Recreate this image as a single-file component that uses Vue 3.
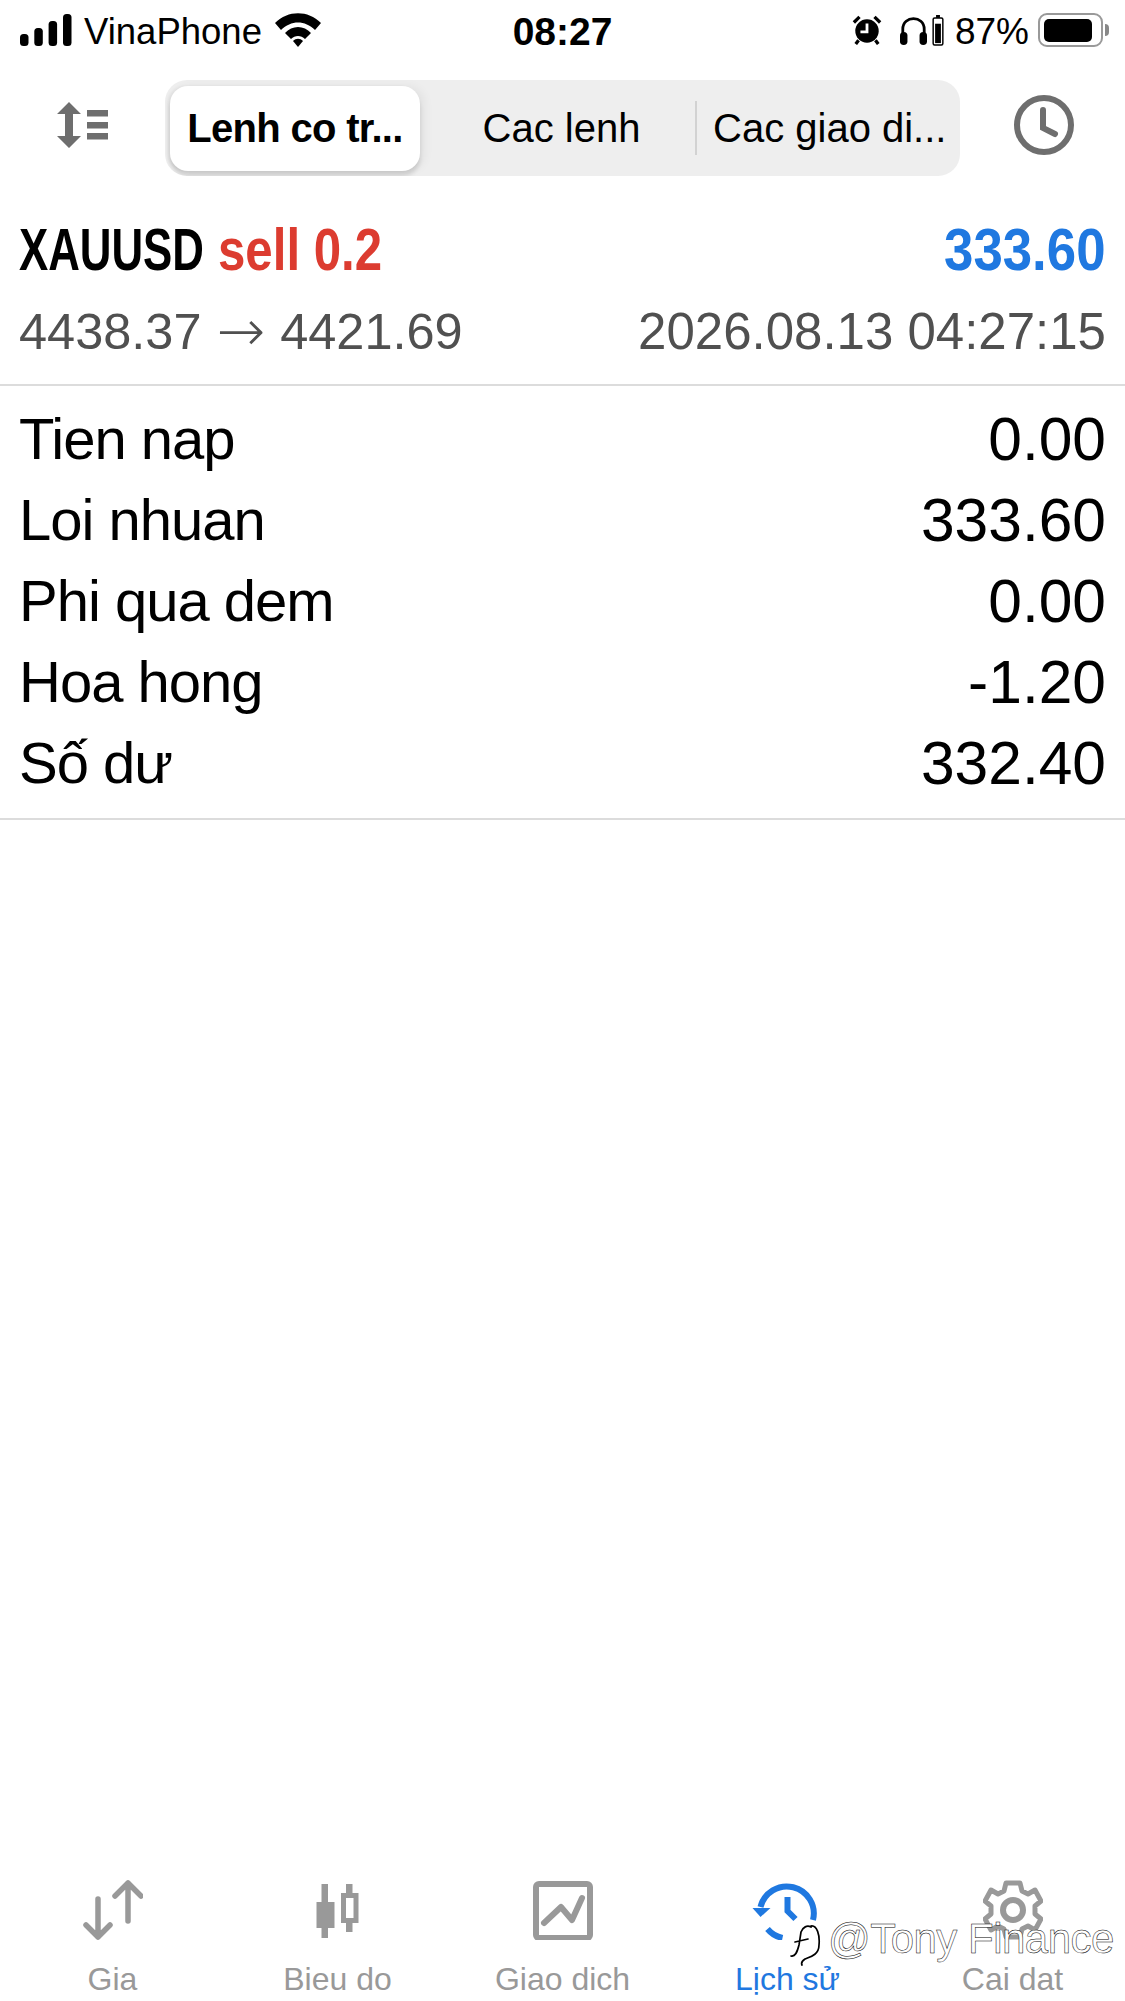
<script setup>
const rows = [
  { label: 'Tien nap', value: '0.00' },
  { label: 'Loi nhuan', value: '333.60' },
  { label: 'Phi qua dem', value: '0.00' },
  { label: 'Hoa hong', value: '-1.20' },
  { label: 'Số dư', value: '332.40' }
]
</script>

<template>
  <div class="screen">
    <div class="status">
      <div class="status-left">
        <svg class="signal" width="52" height="32" viewBox="0 0 52 32">
          <rect x="0" y="20" width="8.5" height="12" rx="3.5" />
          <rect x="14.3" y="14" width="8.5" height="18" rx="3.5" />
          <rect x="28.6" y="7" width="8.5" height="25" rx="3.5" />
          <rect x="43" y="0" width="8.5" height="32" rx="3.5" />
        </svg>
        <span class="carrier">VinaPhone</span>
        <svg class="wifi" width="46" height="34" viewBox="0 0 46 34">
          <path d="M0 10 C13 -3 33 -3 46 10 L40 17 C30 7 16 7 6 17Z" />
          <path d="M10 20 C17 12 29 12 36 20 L30 26 C26 22 20 22 16 26Z" />
          <path d="M18 28 C21 25 25 25 28 28 L23 34Z" />
        </svg>
      </div>
      <span class="time">08:27</span>
      <div class="status-right">
        <svg class="alarm" width="30" height="30" viewBox="0 0 32 32">
          <circle cx="16" cy="17" r="12.5" />
          <path d="M2 8 L8 2 M24 2 L30 8 M7 27 L4 31 M25 27 L28 31" stroke="#000" stroke-width="3.5" />
          <path d="M16 9 V18 H9" stroke="#fff" stroke-width="3" fill="none" />
        </svg>
        <svg class="phones" width="27" height="29" viewBox="0 0 29 31">
          <path d="M3 20 V14 C3 -1 26 -1 26 14 V20" fill="none" stroke="#000" stroke-width="3" />
          <rect x="0" y="17" width="8" height="14" rx="4" />
          <rect x="21" y="17" width="8" height="14" rx="4" />
        </svg>
        <svg class="mini-batt" width="12" height="31" viewBox="0 0 12 32">
          <rect x="4" y="0" width="4" height="3" />
          <rect x="1" y="3" width="10" height="28" rx="1.5" fill="none" stroke="#000" stroke-width="1.5" />
          <rect x="3" y="9" width="6" height="20" />
        </svg>
        <span class="percent">87%</span>
        <div class="battery">
          <div class="battery-fill"></div>
        </div>
        <div class="battery-cap"></div>
      </div>
    </div>

    <div class="toolbar">
      <svg class="sort-icon" width="54" height="46" viewBox="0 0 54 46">
        <path d="M12 0 L24 12 H16 V34 H24 L12 46 L0 34 H8 V12 H0Z" />
        <rect x="30" y="8" width="21" height="6.5" />
        <rect x="30" y="20" width="21" height="6.5" />
        <rect x="30" y="31" width="21" height="6.5" />
      </svg>
      <div class="tabs">
        <div class="tab active">Lenh co tr...</div>
        <div class="tab middle">Cac lenh</div>
        <div class="sep"></div>
        <div class="tab last">Cac giao di...</div>
      </div>
      <svg class="clock-icon" width="60" height="60" viewBox="0 0 60 60">
        <circle cx="30" cy="30" r="27" fill="none" stroke="#6e6e6e" stroke-width="6" />
        <path d="M29 15 V33 L41 39" fill="none" stroke="#6e6e6e" stroke-width="6" stroke-linecap="round" />
      </svg>
    </div>

    <div class="summary">
      <div class="summary-line">
        <div class="symbol">
          <span class="pair">XAUUSD</span>
          <span class="side">sell 0.2</span>
        </div>
        <span class="profit">333.60</span>
      </div>
      <div class="sub-line">
        <span class="prices">4438.37<span class="arrow">→</span>4421.69</span>
        <span class="date">2026.08.13 04:27:15</span>
      </div>
    </div>

    <div class="details">
      <div v-for="row in rows" :key="row.label" class="row">
        <span class="row-label">{{ row.label }}</span>
        <span>{{ row.value }}</span>
      </div>
    </div>

    <div class="spacer"></div>

    <div class="tabbar">
      <div class="nav">
        <svg width="60" height="60" viewBox="0 0 60 60" fill="none" stroke="#999" stroke-width="5.5" stroke-linecap="round" stroke-linejoin="round">
          <path d="M15 19 V57 M3 45 L15 57 L27 45" />
          <path d="M45 3 V41 M32 16 L45 3 L58 16" />
        </svg>
        <span>Gia</span>
      </div>
      <div class="nav">
        <svg width="44" height="60" viewBox="0 0 44 60">
          <rect x="5.5" y="4" width="6.5" height="54" fill="#999" />
          <rect x="0.5" y="22" width="18" height="26" fill="#999" />
          <rect x="30" y="4" width="6.5" height="48" fill="#999" />
          <rect x="27.5" y="15.5" width="12.5" height="25" fill="#fff" stroke="#999" stroke-width="5" />
        </svg>
        <span>Bieu do</span>
      </div>
      <div class="nav">
        <svg width="60" height="60" viewBox="0 0 60 60" fill="none" stroke="#999" stroke-width="6" stroke-linecap="round" stroke-linejoin="round">
          <rect x="3" y="4" width="54" height="54" rx="3" />
          <path d="M11 43 L28 27 L39 40 L49 18" />
        </svg>
        <span>Giao dich</span>
      </div>
      <div class="nav current">
        <svg width="72" height="60" viewBox="0 0 72 60" fill="none" stroke="#1f78e0" stroke-width="6">
          <path d="M8.5 27 A27 27 0 1 1 61 40" />
          <path d="M15.5 49 A27 27 0 0 0 30.5 58" />
          <path d="M0.5 28 H18.5 L8.5 37Z" fill="#1f78e0" stroke="none" />
          <path d="M35.5 17 V31 L43.5 39" />
        </svg>
        <span>Lịch sử</span>
      </div>
      <div class="nav">
        <svg width="60" height="60" viewBox="0 0 60 60">
          <path d="M23 3 H37 L39 11 L45 14 L52 10 L58 21 L52 26 V34 L58 39 L52 50 L45 46 L39 49 L37 57 H23 L21 49 L15 46 L8 50 L2 39 L8 34 V26 L2 21 L8 10 L15 14 L21 11Z" fill="none" stroke="#999" stroke-width="5" stroke-linejoin="round" />
          <circle cx="30" cy="30" r="10" fill="none" stroke="#999" stroke-width="6" />
        </svg>
        <span>Cai dat</span>
      </div>
    </div>

    <div class="watermark">
      <svg width="32" height="42" viewBox="0 0 32 42" fill="none" stroke-linecap="round">
        <path d="M1 31 C5 32 7 28 9 20 L11 7 C13 2 17 0 21 2 M5 17 L18 14 M21 1 C27 0 30 10 29 20 C29 30 20 32 15 34 C12 36 11 38 12 40" stroke="#fff" stroke-width="4" />
        <path d="M1 31 C5 32 7 28 9 20 L11 7 C13 2 17 0 21 2 M5 17 L18 14 M21 1 C27 0 30 10 29 20 C29 30 20 32 15 34 C12 36 11 38 12 40" stroke="#000" stroke-width="1.7" />
      </svg>
      <span class="mark-text">@Tony Finance</span>
    </div>
  </div>
</template>

<style>
html, body {
  margin: 0;
  background: #fff;
}
</style>

<style scoped>
.screen {
  position: relative;
  width: 1125px;
  height: 2001px;
  overflow: hidden;
  display: flex;
  flex-direction: column;
  background: #fff;
  color: #000;
  font-family: "Liberation Sans", Arial, sans-serif;
}

.status {
  height: 60px;
  display: grid;
  grid-template-columns: 1fr auto 1fr;
  align-items: center;
  padding: 0 16px;
}

.status-left {
  display: flex;
  align-items: center;
  padding-left: 4px;
}

.signal, .wifi, .alarm, .phones, .mini-batt {
  fill: #000;
}

.carrier {
  margin-left: 12px;
  margin-right: 13px;
  padding-top: 3px;
  font-size: 36.5px;
}

.percent {
  margin-left: 11px;
  padding-top: 3px;
  font-size: 37px;
}

.time {
  padding-top: 3px;
  font-size: 39px;
  font-weight: 700;
}

.status-right {
  display: flex;
  align-items: center;
  justify-content: flex-end;
}

.phones {
  margin-left: 18px;
}

.mini-batt {
  margin-left: 5px;
}

.battery {
  width: 65px;
  height: 34px;
  margin-left: 9px;
  padding: 3.5px;
  box-sizing: border-box;
  border: 2.5px solid #999;
  border-radius: 9px;
}

.battery-fill {
  width: 48px;
  height: 100%;
  background: #000;
  border-radius: 5px;
}

.battery-cap {
  width: 4px;
  height: 12px;
  margin-left: 2px;
  background: #888;
  border-radius: 0 4px 4px 0;
}

.toolbar {
  display: flex;
  align-items: center;
  height: 96px;
  margin-top: 20px;
  padding-left: 57px;
}

.sort-icon {
  fill: #6e6e6e;
  flex: none;
  margin-bottom: 6px;
}

.tabs {
  display: flex;
  align-items: center;
  width: 795px;
  height: 96px;
  margin-left: 54px;
  overflow: hidden;
  background: #eeeeee;
  border-radius: 22px;
  font-size: 40px;
}

.tab {
  text-align: center;
  white-space: nowrap;
}

.active {
  width: 250px;
  height: 85px;
  margin-left: 5px;
  line-height: 85px;
  background: #fff;
  border-radius: 18px;
  font-weight: 700;
  letter-spacing: -0.7px;
  box-shadow: 0 5px 4px rgba(0, 0, 0, 0.12), 5px 0 10px rgba(0, 0, 0, 0.05), -3px 0 3px rgba(0, 0, 0, 0.05);
}

.middle {
  width: 275px;
  padding-left: 8px;
  box-sizing: border-box;
}

.sep {
  width: 2px;
  height: 54px;
  background: #d2d2d2;
}

.last {
  flex: 1;
  text-align: left;
  padding-left: 16px;
}

.clock-icon {
  flex: none;
  margin-left: 54px;
  margin-bottom: 6px;
}

.summary {
  margin-top: 37px;
  padding: 0 19px;
  height: 171px;
  border-bottom: 2px solid #dcdcdc;
}

.summary-line, .sub-line, .row {
  display: flex;
  justify-content: space-between;
  align-items: center;
}

.summary-line {
  height: 72px;
  font-size: 60px;
  font-weight: 700;
}

.symbol {
  display: flex;
}

.pair, .side, .profit {
  display: inline-block;
}

/* the app draws this line in a condensed face, so squeeze it */
.pair {
  margin-right: -54px;
  transform: scaleX(0.73);
  transform-origin: left center;
}

.side {
  color: #dc3c30;
  transform: scaleX(0.82);
  transform-origin: left center;
}

.profit {
  color: #1f78e0;
  transform: scaleX(0.88);
  transform-origin: right center;
}

.sub-line {
  height: 60px;
  margin-top: 16px;
  font-size: 50.5px;
  color: #505050;
}

.prices {
  display: flex;
  align-items: center;
}

.arrow {
  margin: 0 15px;
  font-family: "DejaVu Sans", sans-serif;
  font-size: 58px;
  font-weight: 200;
  line-height: 60px;
}

.date {
  font-size: 51px;
}

.details {
  padding: 12px 19px 15px;
  border-bottom: 2px solid #dcdcdc;
}

.row {
  height: 81px;
  font-size: 60.5px;
}

.row-label {
  font-size: 58px;
  letter-spacing: -1px;
}

.spacer {
  flex: 1;
}

.tabbar {
  display: grid;
  grid-template-columns: repeat(5, 225px);
  height: 118px;
  padding-bottom: 3px;
}

.nav {
  display: flex;
  flex-direction: column;
  align-items: center;
  justify-content: space-between;
  font-size: 32px;
  color: #999;
}

.current {
  color: #1f78e0;
}

.watermark {
  position: absolute;
  left: 790px;
  top: 1915px;
  display: flex;
  align-items: center;
  gap: 6px;
}

.mark-text {
  margin-bottom: 14px;
  font-size: 42px;
  letter-spacing: -0.5px;
  color: #fff;
  -webkit-text-stroke: 0.5px #000;
  white-space: nowrap;
}
</style>
